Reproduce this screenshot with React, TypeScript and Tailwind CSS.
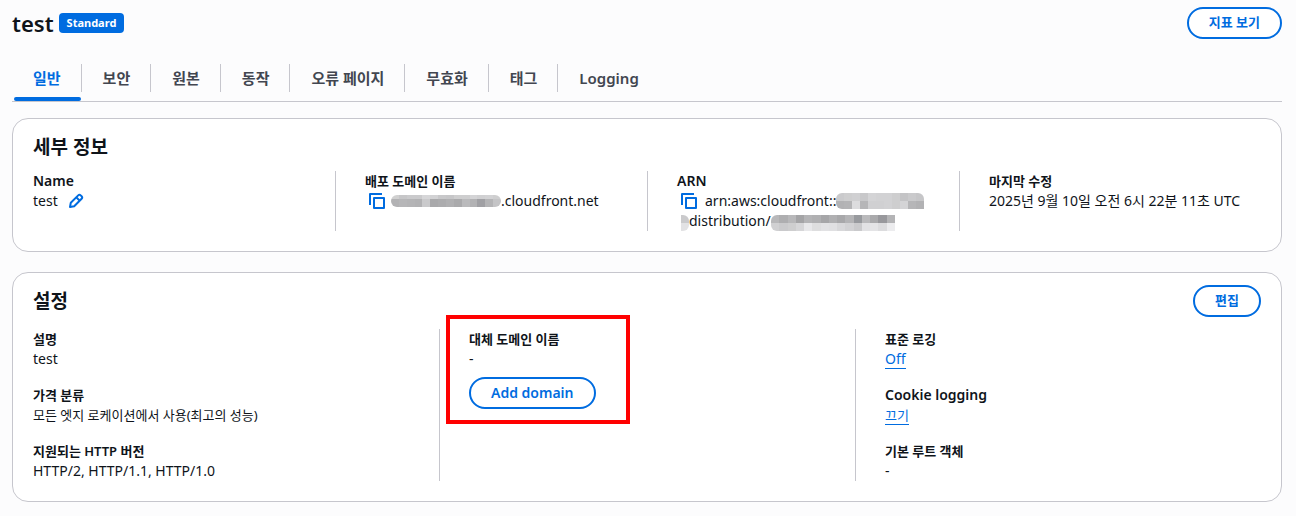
import React from "react";

const tabs = ["일반", "보안", "원본", "동작", "오류 페이지", "무효화", "태그", "Logging"];

interface MosaicProps {
  rows: string[][];
  className: string;
}

/* Pixelated patch that hides account details */
const Mosaic: React.FC<MosaicProps> = ({ rows, className }) => (
  <svg
    className={className}
    viewBox={`0 0 ${rows[0].length} ${rows.length}`}
    preserveAspectRatio="none"
    shapeRendering="crispEdges"
    aria-hidden="true"
  >
    {rows.map((row, y) =>
      row.map((fill, x) => <rect key={`${x}-${y}`} x={x} y={y} width="1" height="1" fill={fill} />)
    )}
  </svg>
);

const domainTop = ["#d0d0d0", "#c6c6c8", "#cacacc", "#cacacc", "#d6d6d8", "#d2d2d4", "#c8c8ca", "#c6c6c8", "#cececf", "#cececf", "#d4d4d6", "#d0d0d2", "#d2d2d4", "#cececf"];
const domainBase = ["#b2b2b4", "#b6b6b8", "#b4b4b6", "#b2b2b4", "#cacacc", "#a9a9ab", "#acacae", "#b0b0b2", "#aaaaac", "#bababc", "#b2b2b4", "#a0a0a4", "#b4b4b6", "#c4c4c6"];
const domainMosaic = [domainTop, domainBase, domainBase];

const accountMosaic = [
  ["#cacacc", "#cececf", "#d0d0d2", "#c8c8ca", "#d4d4d6", "#d2d2d4", "#d2d2d4", "#cececf", "#c4c4c6", "#cacacc", "#c6c6c8"],
  ["#b2b2b4", "#b4b4b6", "#dcdcde", "#b6b6b8", "#d0d0d2", "#d0d0d2", "#d2d2d4", "#cececf", "#d4d4d6", "#b6b6b8", "#b2b2b4"],
];

const idMosaic = [
  ["#b8b8ba", "#aeaeb0", "#b8b8ba", "#a4a4a6", "#b4b4b6", "#b0b0b2", "#a6a6a8", "#b0b0b2", "#a8a8aa", "#b4b4b6", "#989a9e", "#bababc", "#aaaaac", "#98989c", "#b4b4b6"],
  ["#d0d0d2", "#cacacc", "#cececf", "#d6d6d8", "#e8e8ea", "#dededf", "#e2e2e4", "#e0e0e2", "#d8d8da", "#d2d2d4", "#cacacc", "#e2e2e4", "#e4e4e6", "#dcdcde", "#ececee"],
];

const CopyIcon: React.FC = () => (
  <svg width="16" height="16" viewBox="0 0 16 16" fill="none" stroke="currentColor" strokeWidth="2" strokeLinejoin="round">
    <path d="M1 12V1h12" />
    <rect x="5" y="5" width="10" height="10" />
  </svg>
);

const PencilIcon: React.FC = () => (
  <svg width="16" height="16" viewBox="0 0 16 16" fill="none" stroke="currentColor" strokeWidth="2" strokeLinejoin="round">
    <path d="m2 14 .8-4.3 7.4-7.3a1.8 1.8 0 0 1 2.5 0l.9.9a1.8 1.8 0 0 1 0 2.5l-7.4 7.4L2 14Z" />
    <path d="m8.5 4.5 3 3" />
  </svg>
);

const PillButton: React.FC<{ children: React.ReactNode; className?: string }> = ({ children, className = "text-[13px]" }) => (
  <button
    type="button"
    className={`h-8 rounded-full border-2 border-[#006ce0] bg-white px-5 font-semibold text-[#006ce0] ${className}`}
  >
    {children}
  </button>
);

interface FieldProps {
  label: string;
  children: React.ReactNode;
  labelClass?: string;
  valueClass?: string;
}

const Field: React.FC<FieldProps> = ({ label, children, labelClass = "text-[13px]", valueClass = "text-sm" }) => (
  <div>
    <dt className={`font-semibold leading-5 ${labelClass}`}>{label}</dt>
    <dd className={`leading-5 ${valueClass}`}>{children}</dd>
  </div>
);

const column = "border-l border-[#c6c6cd] pl-[29px]";
const link = "inline-block h-5 border-b border-[#006ce0] text-[#006ce0]";

const App: React.FC = () => {
  return (
    <main className="min-h-screen bg-[#fcfcfd] pt-[7px] pr-3.5 pb-3.5 pl-3 font-['Noto_Sans','Noto_Sans_CJK_KR',sans-serif] text-[#0f141a]">
      {/* Header */}
      <header className="flex h-8 items-center justify-between">
        <div className="flex items-center gap-[5px]">
          <h1 className="text-[22px] font-semibold">test</h1>
          <span className="rounded bg-[#006ce0] px-2 text-[11px] leading-5 font-bold text-white">Standard</span>
        </div>
        <PillButton>지표 보기</PillButton>
      </header>

      {/* Tabs */}
      <nav role="tablist" className="mt-4 flex h-[47px] border-b border-[#c6c6cd]">
        {tabs.map((tab, i) => (
          <button
            key={tab}
            type="button"
            role="tab"
            aria-selected={i === 0}
            className={`relative flex items-center text-[15px] font-semibold ${i === 0 ? "text-[#006ce0]" : "text-[#424650]"}`}
          >
            <span className={`pr-5 pl-[21px] leading-7 ${i < tabs.length - 1 ? "border-r border-[#c6c6cd]" : ""}`}>{tab}</span>
            {i === 0 && <span className="absolute right-px bottom-0 left-0.5 h-1 rounded-sm bg-[#006ce0]" />}
          </button>
        ))}
      </nav>

      {/* Details */}
      <section className="mt-4 rounded-2xl border border-[#c6c6cd] bg-white px-2.5 pt-3 pb-5">
        <h2 className="px-2.5 text-[19px] leading-8 font-semibold">세부 정보</h2>
        <dl className="mt-2 grid grid-cols-4">
          <div className="pl-2.5">
            <Field label="Name" labelClass="text-sm">
              <span className="flex items-center gap-2.5">
                test
                <button type="button" aria-label="Edit name" className="text-[#006ce0]">
                  <PencilIcon />
                </button>
              </span>
            </Field>
          </div>
          <div className={column}>
            <Field label="배포 도메인 이름">
              <span className="flex items-center pl-1">
                <button type="button" aria-label="Copy domain" className="mr-1.5 text-[#006ce0]">
                  <CopyIcon />
                </button>
                <Mosaic rows={domainMosaic} className="h-3 w-[110px] rounded-md" />
                .cloudfront.net
              </span>
            </Field>
          </div>
          <div className={column}>
            <Field label="ARN" labelClass="text-sm">
              <span className="flex items-center pl-1">
                <button type="button" aria-label="Copy ARN" className="mr-2 text-[#006ce0]">
                  <CopyIcon />
                </button>
                arn:aws:cloudfront::
                <Mosaic rows={accountMosaic} className="h-4 w-[88px] rounded-t-md rounded-bl-md" />
              </span>
              <span className="flex items-end pl-1">
                <Mosaic rows={[["#cacacc"], ["#e2e2e4"]]} className="h-4 w-2 rounded-r-md" />
                distribution/
                <Mosaic rows={idMosaic} className="h-4 w-[124px] rounded-l-md" />
              </span>
            </Field>
          </div>
          <div className={column}>
            <Field label="마지막 수정">2025년 9월 10일 오전 6시 22분 11초 UTC</Field>
          </div>
        </dl>
      </section>

      {/* Settings */}
      <section className="mt-5 rounded-2xl border border-[#c6c6cd] bg-white px-2.5 pt-3 pb-5">
        <div className="flex items-center justify-between px-2.5">
          <h2 className="text-[19px] leading-8 font-semibold">설정</h2>
          <PillButton>편집</PillButton>
        </div>
        <dl className="mt-3 grid grid-cols-3">
          <div className="flex flex-col gap-4 pl-2.5">
            <Field label="설명">test</Field>
            <Field label="가격 분류" valueClass="text-[13px]">모든 엣지 로케이션에서 사용(최고의 성능)</Field>
            <Field label="지원되는 HTTP 버전">HTTP/2, HTTP/1.1, HTTP/1.0</Field>
          </div>
          <div className={column}>
            <div className="relative w-fit">
              <Field label="대체 도메인 이름">
                <span className="block">-</span>
                <PillButton className="mt-2 text-sm">Add domain</PillButton>
              </Field>
              <div className="pointer-events-none absolute -top-3.5 -right-[34px] -bottom-[15px] -left-[23px] border-4 border-[#ff0000]" />
            </div>
          </div>
          <div className={`flex flex-col gap-4 ${column}`}>
            <Field label="표준 로깅">
              <a href="#logging" className={link}>Off</a>
            </Field>
            <Field label="Cookie logging" labelClass="text-sm">
              <a href="#cookie-logging" className={`${link} text-[13px]`}>끄기</a>
            </Field>
            <Field label="기본 루트 객체">-</Field>
          </div>
        </dl>
      </section>
    </main>
  );
};

export default App;
